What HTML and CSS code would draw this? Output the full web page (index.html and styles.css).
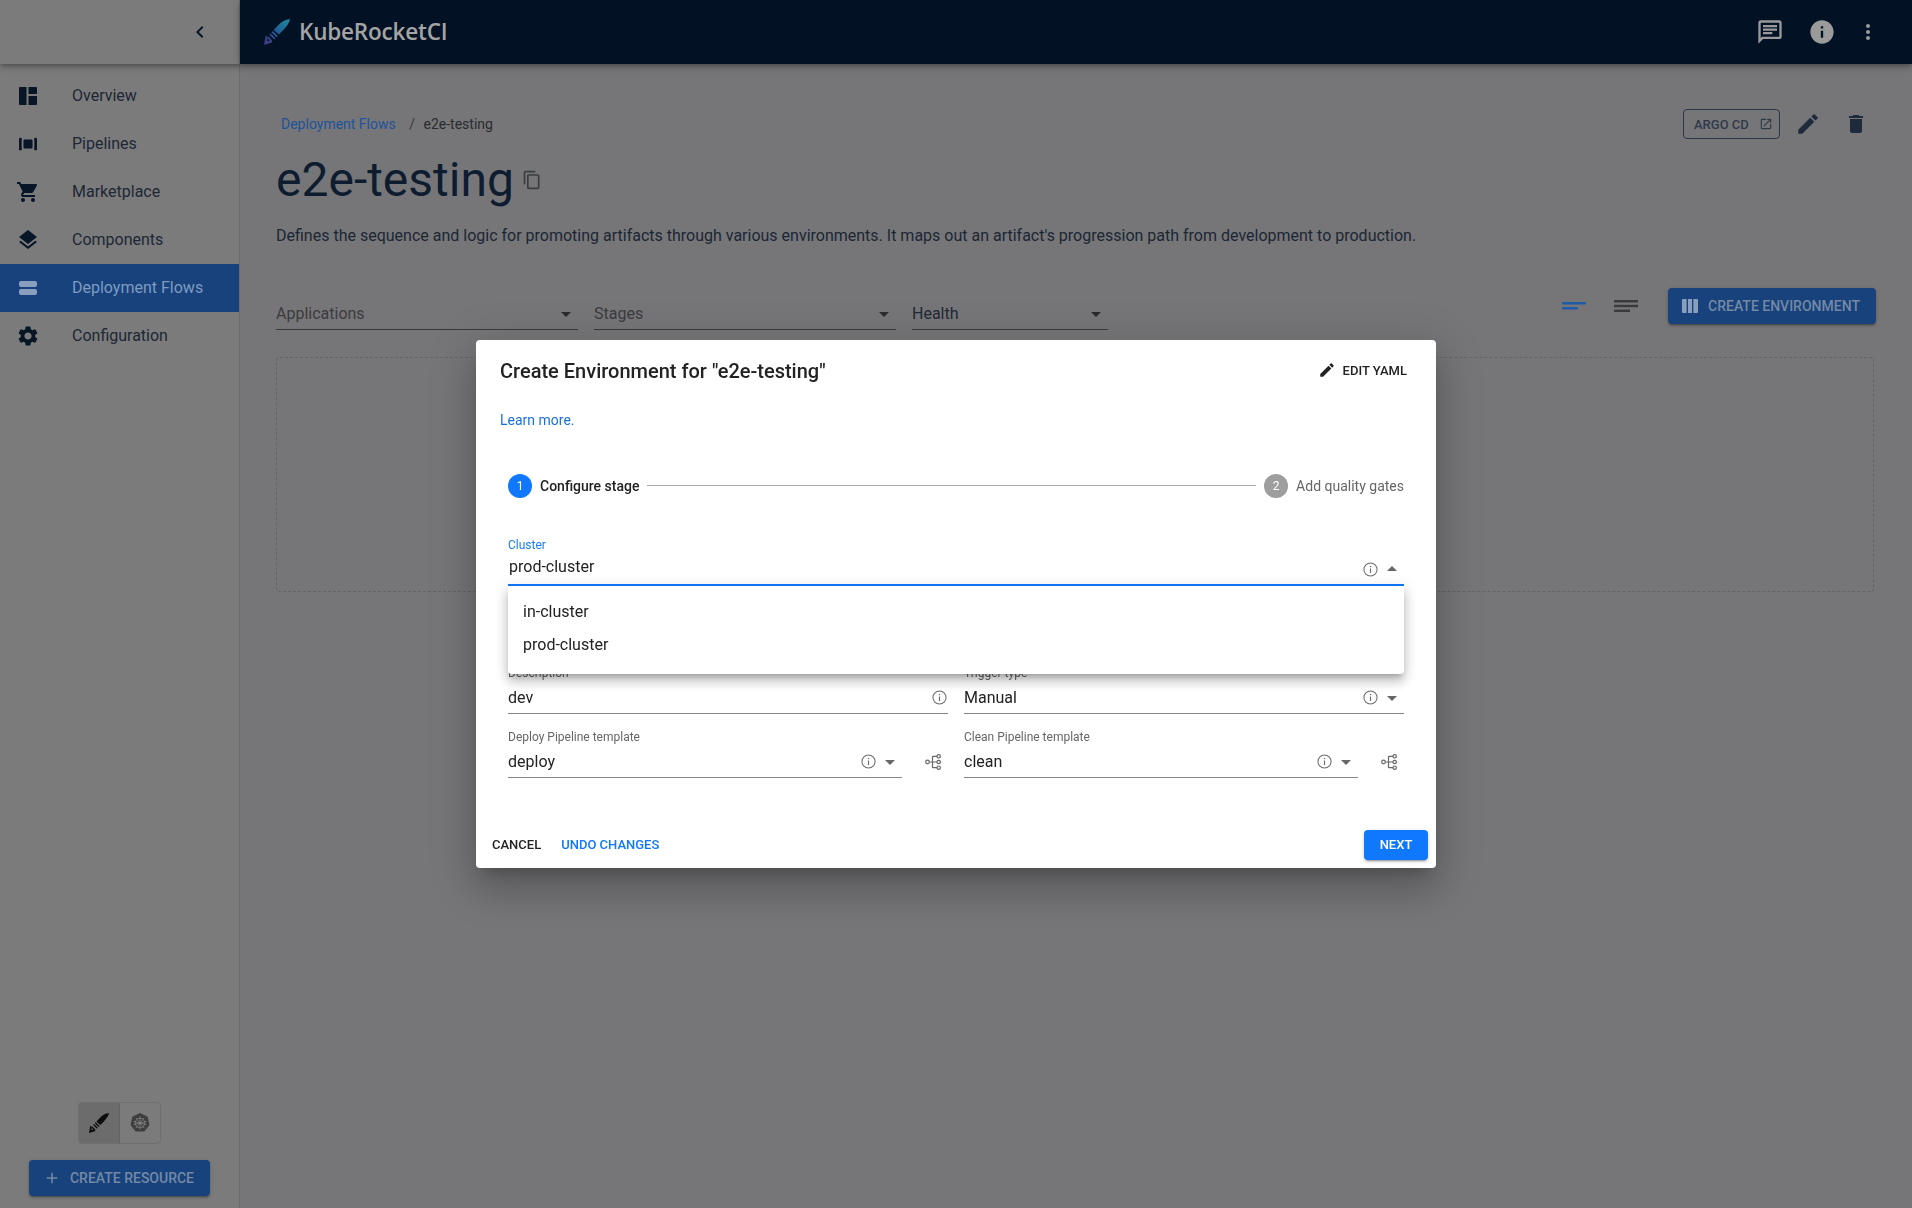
FILE: index.html
```html
<!DOCTYPE html>
<html lang="en">
	<head>
		<meta charset="UTF-8" />
		<title>e2e-testing</title>
		<link rel="stylesheet" href="styles.css">
	</head>

	<body>
		<svg class="sprite">
			<defs>
				<linearGradient id="rocketFill" gradientUnits="userSpaceOnUse" x1="26" y1="0" x2="0" y2="26">
					<stop offset="0" stop-color="#1a8e9c" />
					<stop offset="0.5" stop-color="#1f5c96" />
					<stop offset="1" stop-color="#463583" />
				</linearGradient>
			</defs>
			<symbol id="i-rocket" viewBox="0 0 26 26">
				<path d="M26 0c-4.6.6-8.600 2.700-11.800 6.200L9.700 11l5.100 4.600 4.500-4.700C22.800 7.400 25.200 4 26 0z" />
				<path d="M8.800 12.100l-1.300 1.300 5 4.800 1.300-1.300zM6.600 14.400l-1.200 1.300 4.900 4.800 1.200-1.300z" />
				<path d="M0 26l1.700-9.600 1.900 1.900-.5 3.600 3.600-.5 1.900 1.900z" />
				<path d="M4.300 17.500l4 4-1.300 1.300-4-4z" />
			</symbol>
			<symbol id="i-info" viewBox="0 0 16 16">
				<circle cx="8" cy="8" r="7" fill="none" stroke="currentColor" stroke-width="1.100" />
				<path d="M7.400 4.200h1.200v1.300H7.400zM7.400 6.900h1.200v4.700H7.400z" />
			</symbol>
			<symbol id="i-down" viewBox="0 0 24 24"><path d="M7 10l5 5 5-5z" /></symbol>
			<symbol id="i-up" viewBox="0 0 24 24"><path d="M7 14l5-5 5 5z" /></symbol>
			<symbol id="i-tree" viewBox="0 0 16 16">
				<g fill="none" stroke="currentColor" stroke-width="1.200">
					<circle cx="2.500" cy="8" r="1.800" />
					<circle cx="13.700" cy="2.300" r="1.700" />
					<circle cx="13.700" cy="8" r="1.700" />
					<circle cx="13.700" cy="13.700" r="1.700" />
					<path d="M4.300 8H12M7.500 2.300V13.700M7.500 2.300H12M7.500 13.700H12" />
				</g>
			</symbol>
			<symbol id="i-pencil" viewBox="0 0 24 24">
				<path d="M3 17.250V21h3.750L17.810 9.940l-3.750-3.750L3 17.250zM20.710 7.040c.39-.39.39-1.020 0-1.410l-2.340-2.340c-.39-.39-1.020-.39-1.410 0l-1.830 1.830 3.750 3.750 1.830-1.830z" />
			</symbol>
		</svg>

		<div class="app">
			<aside class="sidebar">
				<div class="side-top">
					<svg class="chevron" viewBox="0 0 24 24"><path d="M15.410 7.410 14 6l-6 6 6 6 1.410-1.410L10.830 12z" /></svg>
				</div>
				<nav class="nav">
					<a class="nav-item">
						<svg class="nav-icon" viewBox="0 0 18 18"><path d="M1 0h6.500v18H1a1 1 0 0 1-1-1V1a1 1 0 0 1 1-1zM9.500 0H17a1 1 0 0 1 1 1v6H9.500zM9.500 9H18v8a1 1 0 0 1-1 1H9.500z" /></svg>
						<span>Overview</span>
					</a>
					<a class="nav-item">
						<svg class="nav-icon" viewBox="0 0 20 14"><rect x="0" y="0" width="3" height="14" rx="1" /><rect x="5" y="2" width="10" height="10" rx="1" /><rect x="17" y="0" width="3" height="14" rx="1" /></svg>
						<span>Pipelines</span>
					</a>
					<a class="nav-item">
						<svg class="nav-icon wide" viewBox="0 0 24 24"><path d="M7 18c-1.100 0-1.990.9-1.990 2S5.900 22 7 22s2-.9 2-2-.9-2-2-2zM1 2v2h2l3.600 7.590-1.350 2.450c-.16.28-.25.61-.25.96 0 1.100.9 2 2 2h12v-2H7.420c-.14 0-.25-.11-.25-.25l.03-.12.9-1.630h7.450c.75 0 1.410-.41 1.750-1.030l3.580-6.490c.08-.14.12-.31.12-.48 0-.55-.45-1-1-1H5.210l-.94-2H1zm16 16c-1.100 0-1.990.9-1.990 2s.89 2 1.990 2 2-.9 2-2-.9-2-2-2z" /></svg>
						<span>Marketplace</span>
					</a>
					<a class="nav-item">
						<svg class="nav-icon wide" viewBox="0 0 24 24"><path d="M11.990 18.540l-7.370-5.730L3 14.070l9 7 9-7-1.630-1.270-7.380 5.740zM12 16l7.360-5.730L21 9l-9-7-9 7 1.630 1.270L12 16z" /></svg>
						<span>Components</span>
					</a>
					<a class="nav-item active">
						<svg class="nav-icon" viewBox="0 0 18 14"><rect width="18" height="6" rx="2" /><rect y="8" width="18" height="6" rx="2" /></svg>
						<span>Deployment Flows</span>
					</a>
					<a class="nav-item">
						<svg class="nav-icon wide" viewBox="0 0 24 24"><path d="M19.140 12.940c.04-.3.06-.61.06-.94 0-.32-.02-.64-.07-.94l2.030-1.580c.18-.14.23-.41.12-.61l-1.920-3.320c-.12-.22-.37-.29-.59-.22l-2.390.96c-.5-.38-1.030-.7-1.620-.94l-.36-2.540c-.04-.24-.24-.41-.48-.41h-3.840c-.24 0-.43.17-.47.41l-.36 2.540c-.59.24-1.130.57-1.620.94l-2.390-.96c-.22-.08-.47 0-.59.22L2.740 8.870c-.12.21-.08.47.12.61l2.030 1.580c-.05.3-.09.63-.09.94s.02.64.07.94l-2.030 1.580c-.18.14-.23.41-.12.61l1.920 3.320c.12.22.37.29.59.22l2.390-.96c.5.38 1.030.7 1.620.94l.36 2.540c.05.24.24.41.48.41h3.840c.24 0 .44-.17.47-.41l.36-2.540c.59-.24 1.130-.56 1.620-.94l2.390.96c.22.08.47 0 .59-.22l1.920-3.320c.12-.22.07-.47-.12-.61l-2.010-1.580zM12 15.600c-1.980 0-3.600-1.620-3.600-3.600s1.620-3.600 3.600-3.600 3.600 1.620 3.600 3.600-1.620 3.600-3.600 3.600z" /></svg>
						<span>Configuration</span>
					</a>
				</nav>
				<div class="side-bottom">
					<div class="toggle">
						<div class="toggle-btn on">
							<svg class="toggle-icon"><use href="#i-rocket" /></svg>
						</div>
						<div class="toggle-btn">
							<svg class="kube-icon" viewBox="0 0 20 20">
								<path d="M10 0l7.600 3.700 1.900 8.200-5.300 6.600H5.800L.5 11.900l1.900-8.200z" />
								<g fill="none" stroke="#8a8a8a" stroke-width="0.7">
									<circle cx="10" cy="10" r="4.800" />
									<path d="M10 3.300v13.400M3.500 8.500l13 3M16.500 8.500l-13 3M5.800 4.800l8.400 10.400M14.200 4.800L5.800 15.200" />
								</g>
							</svg>
						</div>
					</div>
					<button class="btn-fill create-res">
						<svg class="btn-plus" viewBox="0 0 24 24"><path d="M19 13h-6v6h-2v-6H5v-2h6V5h2v6h6v2z" /></svg>
						Create resource
					</button>
				</div>
			</aside>

			<div class="right">
				<header class="topbar">
					<svg class="logo"><use href="#i-rocket" fill="url(#rocketFill)" /></svg>
					<span class="brand">KubeRocketCI</span>
					<div class="top-icons">
						<svg class="top-icon" viewBox="0 0 24 24"><path d="M20 2H4c-1.100 0-1.990.9-1.990 2L2 22l4-4h14c1.100 0 2-.9 2-2V4c0-1.100-.9-2-2-2zm0 14H5.170L4 17.170V4h16v12zM6 12h8v2H6zm0-3h12v2H6zm0-3h12v2H6z" /></svg>
						<svg class="top-icon" viewBox="0 0 24 24"><path d="M12 2C6.480 2 2 6.480 2 12s4.480 10 10 10 10-4.480 10-10S17.520 2 12 2zm1 15h-2v-6h2v6zm0-8h-2V7h2v2z" /></svg>
						<svg class="top-dots" viewBox="0 0 24 24"><path d="M12 8c1.100 0 2-.9 2-2s-.9-2-2-2-2 .9-2 2 .9 2 2 2zm0 2c-1.100 0-2 .9-2 2s.9 2 2 2 2-.9 2-2-.9-2-2-2zm0 6c-1.100 0-2 .9-2 2s.9 2 2 2 2-.9 2-2-.9-2-2-2z" /></svg>
					</div>
				</header>

				<main class="main">
					<div class="crumb-row">
						<div class="crumbs">
							<a class="crumb-link">Deployment Flows</a>
							<span class="crumb-sep">/</span>
							<span>e2e-testing</span>
						</div>
						<div class="actions">
							<button class="btn-outline">
								Argo CD
								<svg class="ext-icon" viewBox="0 0 24 24"><path d="M19 19H5V5h7V3H5c-1.110 0-2 .9-2 2v14c0 1.100.89 2 2 2h14c1.100 0 2-.9 2-2v-7h-2v7zM14 3v2h3.590l-9.830 9.830 1.410 1.410L19 6.410V10h2V3h-7z" /></svg>
							</button>
							<svg class="act-icon pencil"><use href="#i-pencil" /></svg>
							<svg class="act-icon" viewBox="0 0 24 24"><path d="M6 19c0 1.100.9 2 2 2h8c1.100 0 2-.9 2-2V7H6v12zM19 4h-3.500l-1-1h-5l-1 1H5v2h14V4z" /></svg>
						</div>
					</div>

					<div class="title-row">
						<h1 class="title">e2e-testing</h1>
						<svg class="copy-icon" viewBox="0 0 24 24"><path d="M16 1H4c-1.100 0-2 .9-2 2v14h2V3h12V1zm3 4H8c-1.100 0-2 .9-2 2v14c0 1.100.9 2 2 2h11c1.100 0 2-.9 2-2V7c0-1.100-.9-2-2-2zm0 16H8V7h11v14z" /></svg>
					</div>
					<p class="desc">Defines the sequence and logic for promoting artifacts through various environments. It maps out an artifact's progression path from development to production.</p>

					<div class="filter-row">
						<div class="filter w-app"><span>Applications</span><svg class="caret"><use href="#i-down" /></svg></div>
						<div class="filter w-app"><span>Stages</span><svg class="caret"><use href="#i-down" /></svg></div>
						<div class="filter w-health"><span>Health</span><svg class="caret"><use href="#i-down" /></svg></div>
						<div class="view-tools">
							<svg class="sort-icon blue" viewBox="0 0 24 12"><rect y="2" width="24" height="2.400" rx="1" /><rect y="7" width="16" height="2.400" rx="1" /></svg>
							<svg class="sort-icon" viewBox="0 0 24 12"><rect y="0" width="24" height="2.400" /><rect y="4.800" width="24" height="2.400" /><rect y="9.600" width="16" height="2.400" /></svg>
							<button class="btn-fill create-env">
								<svg class="cols-icon" viewBox="0 0 16 14"><path d="M1 0h3.600v14H1a1 1 0 0 1-1-1V1a1 1 0 0 1 1-1zM6 0h4v14H6zM11.400 0H15a1 1 0 0 1 1 1v12a1 1 0 0 1-1 1h-3.600z" /></svg>
								Create environment
							</button>
						</div>
					</div>

					<div class="empty-box"></div>
				</main>
			</div>
		</div>

		<div class="overlay">
			<section class="dialog">
				<div class="dialog-head">
					<h2 class="dialog-title">Create Environment for "e2e-testing"</h2>
					<button class="btn-text head-btn">
						<svg class="head-pencil"><use href="#i-pencil" /></svg>
						Edit YAML
					</button>
				</div>
				<a class="learn">Learn more.</a>

				<div class="stepper">
					<span class="step-num">1</span>
					<span class="step-label">Configure stage</span>
					<span class="step-line"></span>
					<span class="step-num off">2</span>
					<span class="step-label off">Add quality gates</span>
				</div>

				<div class="form">
					<div class="field focus wide-field">
						<label class="field-label">Cluster</label>
						<div class="field-row">
							<span class="field-value lifted">prod-cluster</span>
							<svg class="info"><use href="#i-info" /></svg>
							<svg class="caret"><use href="#i-up" /></svg>
						</div>
						<ul class="menu">
							<li>in-cluster</li>
							<li>prod-cluster</li>
						</ul>
					</div>
					<div class="wide-field"></div>

					<div class="field">
						<label class="field-label">Description</label>
						<div class="field-row">
							<span class="field-value">dev</span>
							<svg class="info solo"><use href="#i-info" /></svg>
						</div>
					</div>
					<div class="field">
						<label class="field-label">Trigger type</label>
						<div class="field-row">
							<span class="field-value">Manual</span>
							<svg class="info"><use href="#i-info" /></svg>
							<svg class="caret"><use href="#i-down" /></svg>
						</div>
					</div>

					<div class="tree-cell">
						<div class="field">
							<label class="field-label">Deploy Pipeline template</label>
							<div class="field-row">
								<span class="field-value">deploy</span>
								<svg class="info"><use href="#i-info" /></svg>
								<svg class="caret"><use href="#i-down" /></svg>
							</div>
						</div>
						<svg class="tree"><use href="#i-tree" /></svg>
					</div>
					<div class="tree-cell">
						<div class="field">
							<label class="field-label">Clean Pipeline template</label>
							<div class="field-row">
								<span class="field-value">clean</span>
								<svg class="info"><use href="#i-info" /></svg>
								<svg class="caret"><use href="#i-down" /></svg>
							</div>
						</div>
						<svg class="tree"><use href="#i-tree" /></svg>
					</div>
				</div>

				<div class="dialog-foot">
					<button class="btn-text">Cancel</button>
					<button class="btn-text blue">Undo changes</button>
					<button class="btn-next">Next</button>
				</div>
			</section>
		</div>
	</body>
</html>
```

FILE: styles.css
```css
* {
	box-sizing: border-box;
	margin: 0;
	padding: 0;
}

html,
body {
	height: 100%;
	overflow: hidden;
}

body {
	font-family: Roboto, "Liberation Sans", sans-serif;
	font-size: 14px;
	background: #767679;
	color: #1d2735;
}

button {
	font-family: inherit;
	border: none;
	background: none;
	cursor: pointer;
}

svg {
	fill: currentColor;
	flex: none;
}

.sprite {
	position: absolute;
	width: 0;
	height: 0;
}

.app {
	display: flex;
	height: 100vh;
}

/* sidebar */
.sidebar {
	width: 240px;
	flex: none;
	display: flex;
	flex-direction: column;
	background: #7b7b7b;
	border-right: 1px solid #6c6c6d;
}

.side-top {
	height: 64px;
	margin-right: -1px;
	display: flex;
	align-items: center;
	justify-content: flex-end;
	padding-right: 28px;
	box-shadow: 0 2px 4px -1px rgba(0, 0, 0, 0.2), 0 4px 5px rgba(0, 0, 0, 0.14), 0 1px 10px rgba(0, 0, 0, 0.12);
	position: relative;
}

.chevron {
	width: 24px;
	height: 24px;
	color: #0b1626;
}

.nav {
	padding-top: 8px;
}

.nav-item {
	height: 48px;
	display: flex;
	align-items: center;
	font-size: 16px;
	padding-left: 19px;
}

.nav-item span {
	margin: 0 0 2px 35px;
}

.nav-icon {
	width: 18px;
	height: 18px;
	color: #071526;
}

.nav-icon.wide {
	width: 24px;
	height: 24px;
	margin: 0 -3px;
}

.nav-item.active {
	background: #17427b;
	color: #7f9bc2;
}

.nav-item.active .nav-icon {
	color: #8a9fbd;
}

.side-bottom {
	margin-top: auto;
	padding-bottom: 12px;
	display: flex;
	flex-direction: column;
	align-items: center;
}

.toggle {
	display: flex;
	height: 42px;
	width: 83px;
	border: 1px solid #6f6f6f;
	border-radius: 4px;
	overflow: hidden;
}

.toggle-btn {
	flex: 1;
	display: flex;
	align-items: center;
	justify-content: center;
}

.toggle-btn.on {
	background: #6c6c6c;
	border-right: 1px solid #626262;
}

.toggle-icon {
	width: 20px;
	height: 20px;
	color: #0d0d0d;
}

.kube-icon {
	width: 20px;
	height: 20px;
	color: #3d3d3d;
}

.btn-fill {
	display: flex;
	align-items: center;
	justify-content: center;
	background: #17427b;
	color: #7489a6;
	font-size: 14px;
	font-weight: 500;
	text-transform: uppercase;
	border-radius: 4px;
	box-shadow: 0 3px 1px -2px rgba(0, 0, 0, 0.2), 0 2px 2px rgba(0, 0, 0, 0.14), 0 1px 5px rgba(0, 0, 0, 0.12);
}

.create-res {
	margin-top: 16px;
	width: 181px;
	height: 36px;
	padding-right: 2px;
}

.btn-plus {
	width: 18px;
	height: 18px;
	margin-right: 9px;
}

/* top bar */
.right {
	flex: 1;
	min-width: 0;
	display: flex;
	flex-direction: column;
}

.topbar {
	height: 64px;
	flex: none;
	display: flex;
	align-items: center;
	padding-left: 24px;
	background: #031124;
	box-shadow: 0 2px 4px -1px rgba(0, 0, 0, 0.2), 0 4px 5px rgba(0, 0, 0, 0.14), 0 1px 10px rgba(0, 0, 0, 0.12);
	position: relative;
}

.logo {
	width: 26px;
	height: 26px;
}

.brand {
	margin: 0 0 2px 9px;
	font-family: "Open Sans", sans-serif;
	font-size: 22.5px;
	font-weight: 600;
	color: #a4a4a4;
	letter-spacing: -0.2px;
}

.top-icons {
	margin-left: auto;
	display: flex;
	align-items: center;
	color: #9a9a9a;
	padding-right: 32px;
}

.top-icon {
	width: 28px;
	height: 28px;
	margin-right: 24px;
}

.top-dots {
	width: 24px;
	height: 24px;
	margin-left: -4px;
}

/* page */
.main {
	flex: 1;
	padding: 45px 36px 0;
}

.crumb-row {
	display: flex;
	align-items: center;
	justify-content: space-between;
	height: 30px;
}

.crumbs {
	padding-left: 5px;
	color: #2b2b2d;
}

.crumb-link {
	color: #1f5299;
}

.crumb-sep {
	margin: 0 5px 0 10px;
	color: #3a3a3c;
}

.actions {
	display: flex;
	align-items: center;
	color: #1f2b3b;
}

.btn-outline {
	display: flex;
	align-items: center;
	width: 97px;
	height: 30px;
	padding-left: 10px;
	border: 1px solid #2a3646;
	border-radius: 4px;
	color: #2f3a49;
	font-size: 13px;
	font-weight: 500;
	text-transform: uppercase;
}

.ext-icon {
	width: 14px;
	height: 14px;
	margin-left: 10px;
}

.act-icon {
	width: 24px;
	height: 24px;
	margin-left: 15px;
}

.act-icon.pencil {
	width: 26px;
	height: 26px;
}

.act-icon:last-child {
	margin: 0 8px 0 23px;
}

.title-row {
	display: flex;
	align-items: center;
	margin-top: 13px;
}

.title {
	font-size: 48px;
	font-weight: 400;
	line-height: 56px;
	color: #0e1c30;
}

.copy-icon {
	width: 20px;
	height: 20px;
	margin-left: 8px;
	color: #3b3d40;
}

.desc {
	margin-top: 16px;
	font-size: 16px;
	line-height: 24px;
	color: #1c2633;
}

.filter-row {
	display: flex;
	align-items: flex-end;
	margin-top: 40px;
	height: 42px;
}

.filter {
	display: flex;
	align-items: center;
	justify-content: space-between;
	height: 34px;
	margin-right: 16px;
	padding-top: 2px;
	border-bottom: 1px solid #3a3a3c;
	font-size: 16px;
	color: #3b3b3d;
}

.filter:nth-child(3) {
	color: #1f2935;
}

.w-app {
	width: 302px;
}

.w-health {
	width: 196px;
}

.filter .caret {
	color: #2b2b2d;
}

.view-tools {
	margin-left: auto;
	align-self: flex-start;
	display: flex;
	align-items: center;
	height: 36px;
}

.sort-icon {
	width: 24px;
	height: 12px;
	margin-right: 28px;
	color: #3a3a3c;
}

.sort-icon.blue {
	color: #1f5ca8;
}

.create-env {
	width: 208px;
	height: 36px;
	margin-left: 2px;
	padding-right: 2px;
}

.cols-icon {
	width: 16px;
	height: 14px;
	margin-right: 10px;
	color: #8a9fbd;
}

.empty-box {
	height: 235px;
	margin: 27px 2px 0 0;
	border: 1px dashed #656568;
	border-radius: 4px;
}

/* dialog */
.overlay {
	position: fixed;
	top: 0;
	left: 0;
	right: 0;
	bottom: 0;
	display: flex;
	align-items: center;
	justify-content: center;
}

.dialog {
	width: 960px;
	background: #fff;
	color: #222;
	border-radius: 4px;
	box-shadow: 0 11px 15px -7px rgba(0, 0, 0, 0.2), 0 24px 38px 3px rgba(0, 0, 0, 0.14), 0 9px 46px 8px rgba(0, 0, 0, 0.12);
}

.dialog-head {
	display: flex;
	align-items: center;
	justify-content: space-between;
	padding: 15px 24px 0;
}

.dialog-title {
	font-size: 20px;
	font-weight: 500;
	line-height: 32px;
}

.btn-text {
	height: 30px;
	padding: 0 8px 2px;
	font-size: 13px;
	font-weight: 500;
	text-transform: uppercase;
	color: #222;
}

.btn-text.blue {
	color: #1078ff;
	margin-left: 4px;
}

.head-btn {
	display: flex;
	align-items: center;
	padding-right: 5px;
}

.head-pencil {
	width: 18px;
	height: 18px;
	margin-right: 7px;
}

.learn {
	display: block;
	margin: 23px 0 0 24px;
	line-height: 20px;
	color: #1a6fdc;
}

.stepper {
	display: flex;
	align-items: center;
	margin: 44px 32px 0;
	height: 24px;
}

.step-num {
	width: 24px;
	height: 24px;
	border-radius: 50%;
	background: #1078ff;
	color: #fff;
	font-size: 12px;
	line-height: 24px;
	text-align: center;
}

.step-num.off {
	background: #9e9e9e;
}

.step-label {
	margin-left: 8px;
	font-weight: 500;
}

.step-label.off {
	font-weight: 400;
	color: #666;
}

.step-line {
	flex: 1;
	margin: 0 8px;
	border-top: 1px solid #aaa;
	transform: translateY(-1px);
}

.form {
	display: grid;
	grid-template-columns: 440px 440px;
	grid-auto-rows: 48px;
	gap: 16px;
	margin: 40px 32px 0;
}

.wide-field {
	grid-column: span 2;
}

.field {
	position: relative;
	display: flex;
	flex-direction: column;
	height: 48px;
	flex: 1;
	min-width: 0;
	border-bottom: 1px solid #888;
}

.field.focus {
	border-bottom: 2px solid #1078ff;
}

.field-label {
	font-size: 12px;
	line-height: 14px;
	color: #666;
}

.field.focus .field-label {
	color: #1a7cff;
}

.field-row {
	flex: 1;
	display: flex;
	align-items: center;
	padding-top: 2px;
}

.field-value {
	flex: 1;
	font-size: 16px;
	color: #222;
}

.field-value.lifted {
	margin: 0 0 6px 1px;
}

.info {
	width: 15px;
	height: 15px;
	margin-right: 9px;
	color: #6b6b6b;
}

.info.solo {
	margin-right: 1px;
}

.caret {
	width: 24px;
	height: 24px;
	color: #666;
}

.field-row .caret {
	margin-left: -7px;
}

.menu {
	position: absolute;
	top: 48px;
	left: 0;
	right: 0;
	height: 88px;
	padding-top: 9px;
	list-style: none;
	background: #fff;
	border-radius: 0 0 4px 4px;
	box-shadow: 0 5px 5px -3px rgba(0, 0, 0, 0.2), 0 8px 10px 1px rgba(0, 0, 0, 0.14), 0 3px 14px 2px rgba(0, 0, 0, 0.12);
	z-index: 2;
}

.menu li {
	padding-left: 15px;
	font-size: 16px;
	line-height: 33px;
	color: #222;
}

.tree-cell {
	display: flex;
}

.tree {
	width: 16px;
	height: 16px;
	margin: 24px 7px 0 23px;
	color: #666;
}

.dialog-foot {
	display: flex;
	align-items: center;
	margin-top: 52px;
	padding: 0 8px 8px;
}

.btn-next {
	margin-left: auto;
	width: 64px;
	height: 30px;
	padding-bottom: 1px;
	border-radius: 4px;
	background: #1078ff;
	color: #fff;
	font-size: 13px;
	font-weight: 500;
	text-transform: uppercase;
	box-shadow: 0 3px 1px -2px rgba(0, 0, 0, 0.2), 0 2px 2px rgba(0, 0, 0, 0.14), 0 1px 5px rgba(0, 0, 0, 0.12);
}
```
